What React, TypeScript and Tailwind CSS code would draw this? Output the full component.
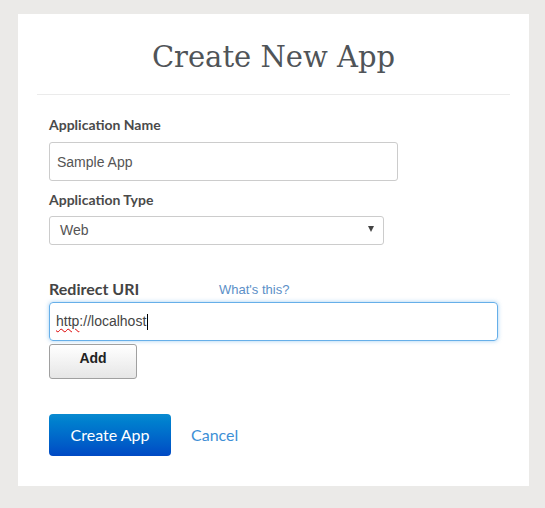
import React from "react";

export default function App() {
  return (
    <div className="min-h-[508px] w-full bg-[#ebeae8] pt-[14px] pl-[18px] pr-[16px] pb-[22px]">
      <div className="w-[511px] h-[472px] bg-white px-[19px]">
        <h1
          className="pt-[23px] pb-[17px] text-center text-[29px] leading-[40px] text-[#505458]"
          style={{ fontFamily: '"DejaVu Serif", serif' }}
        >
          Create New App
        </h1>
        <div className="h-px bg-[#ebebeb]" />

        <form
          className="pl-[12px] pt-[22px]"
          style={{ fontFamily: '"Liberation Sans", Arial, sans-serif' }}
          onSubmit={(e) => e.preventDefault()}
        >
          <label className="block text-[14px] font-bold leading-[16px] text-[#4a4a4a] mb-[9px]" style={{ fontFamily: "Lato, sans-serif" }}>
            Application Name
          </label>
          <input
            defaultValue="Sample App"
            className="block w-[349px] h-[39px] rounded-[3px] border border-[#cccccc] px-[7px] text-[14px] text-[#555] outline-none"
          />

          <label className="block mt-[11px] text-[14px] font-bold leading-[16px] text-[#4a4a4a] mb-[8px]" style={{ fontFamily: "Lato, sans-serif" }}>
            Application Type
          </label>
          <div className="relative w-[335px] h-[29px] rounded-[3px] border border-[#cccccc] flex items-center px-[10px] text-[14px] text-[#555]">
            Web
            <span className="absolute right-[9px] top-[9px] w-0 h-0 border-l-[3.5px] border-r-[3.5px] border-t-[6px] border-l-transparent border-r-transparent border-t-[#444]" />
          </div>

          <div className="flex items-end mt-[35px] mb-[4px]">
            <span className="w-[170px] text-[16px] font-bold leading-[18px] text-[#444]" style={{ fontFamily: "Lato, sans-serif" }}>
              Redirect URI
            </span>
            <a className="text-[13px] leading-[16px] text-[#5b8fc7] cursor-pointer">What's this?</a>
          </div>
          <div className="w-[449px] h-[39px] rounded-[4px] border border-[#66afe9] shadow-[0_0_4px_rgba(102,175,233,0.6)] flex items-center px-[6px] text-[14px] text-[#444]">
            <span className="underline decoration-wavy decoration-[#d00] decoration-1 underline-offset-2">http</span>
            ://localhost
            <span className="ml-px inline-block w-px h-[16px] bg-black" />
          </div>
          <button
            type="button"
            className="mt-[3px] block w-[88px] h-[35px] rounded-[3px] border border-[#a0a0a0] bg-gradient-to-b from-white to-[#e6e6e6] pb-[6px] text-[14px] font-bold text-[#222]"
          >
            Add
          </button>

          <div className="flex items-center mt-[35px]">
            <button
              type="submit"
              className="w-[122px] h-[42px] rounded-[4px] bg-gradient-to-b from-[#0a8ad0] to-[#0049c4] text-[16px] text-white"
              style={{ fontFamily: "Lato, sans-serif" }}
            >
              Create App
            </button>
            <a className="ml-[20px] text-[16px] text-[#3d8fd6] cursor-pointer" style={{ fontFamily: "Lato, sans-serif" }}>
              Cancel
            </a>
          </div>
        </form>
      </div>
    </div>
  );
}
